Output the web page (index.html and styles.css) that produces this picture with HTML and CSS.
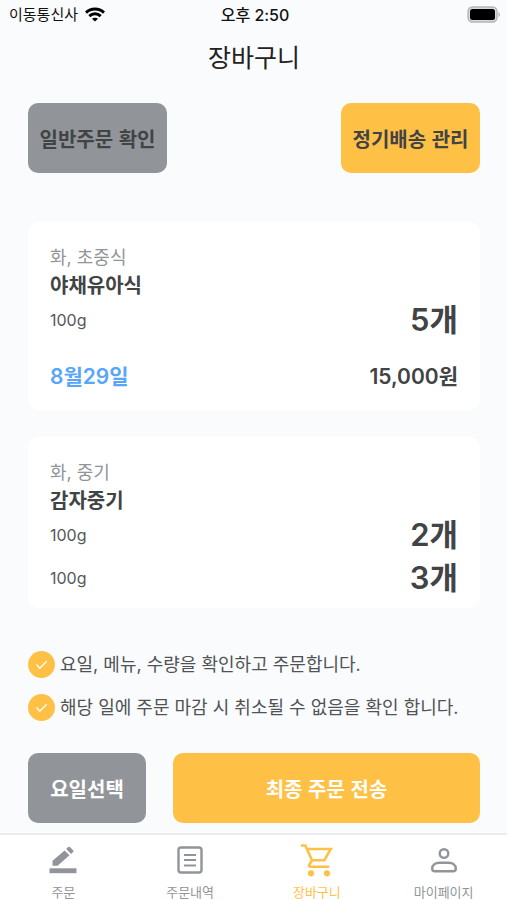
FILE: index.html
```html
<!DOCTYPE html>
<html lang="ko">
<head>
<meta charset="utf-8">
<meta name="viewport" content="width=device-width, initial-scale=1">
<title>장바구니</title>
<link rel="stylesheet" href="styles.css">
</head>
<body>
<div class="status">
  <div class="carrier">
    <span>이동통신사</span>
    <svg width="20" height="15" viewBox="0 0 20 15" fill="none" stroke="#000" stroke-width="3" aria-hidden="true">
      <path d="M1 5.6C6 .8 14 .8 19 5.6"/>
      <path d="M4.3 9.1c3.3-3 8.1-3 11.4 0"/>
      <path d="M10 14.6 7 11.8c1.7-1.5 4.3-1.5 6 0z" fill="#000" stroke="none"/>
    </svg>
  </div>
  <time class="clock">오후 2:50</time>
  <svg class="battery" width="34" height="17" viewBox="0 0 34 17" aria-hidden="true">
    <rect x="1" y="1" width="29" height="15" rx="4.5" fill="#d8d9db" stroke="#b4b5b7" stroke-width="1.4"/>
    <rect x="3" y="3" width="25" height="11" rx="2.5" fill="#000"/>
    <path d="M31.5 6c2 .8 2 4.2 0 5z" fill="#b4b5b7"/>
  </svg>
</div>

<main class="page">
  <h1 class="title">장바구니</h1>

  <div class="modes">
    <button class="btn btn-gray btn-dark" type="button">일반주문 확인</button>
    <button class="btn btn-yellow btn-dark" type="button">정기배송 관리</button>
  </div>

  <section class="card">
    <p class="meta">화, 초중식</p>
    <h2 class="name">야채유아식</h2>
    <div class="items">
      <div class="item"><span class="weight">100g</span><strong class="count">5개</strong></div>
    </div>
    <div class="total"><span class="date">8월29일</span><span>15,000원</span></div>
  </section>

  <section class="card card-short">
    <p class="meta">화, 중기</p>
    <h2 class="name">감자중기</h2>
    <div class="items">
      <div class="item"><span class="weight">100g</span><strong class="count">2개</strong></div>
      <div class="item"><span class="weight">100g</span><strong class="count">3개</strong></div>
    </div>
  </section>

  <div class="checks">
    <label class="check">
      <input type="checkbox" checked>
      <svg class="tick" width="27" height="27" viewBox="0 0 27 27" aria-hidden="true"><path d="m8.5 13.5 3.2 3.7 7-7"/></svg>
      <span>요일, 메뉴, 수량을 확인하고 주문합니다.</span>
    </label>
    <label class="check">
      <input type="checkbox" checked>
      <svg class="tick" width="27" height="27" viewBox="0 0 27 27" aria-hidden="true"><path d="m8.5 13.5 3.2 3.7 7-7"/></svg>
      <span>해당 일에 주문 마감 시 취소될 수 없음을 확인 합니다.</span>
    </label>
  </div>

  <div class="actions">
    <button class="btn btn-gray" type="button">요일선택</button>
    <button class="btn btn-yellow btn-wide" type="button">최종 주문 전송</button>
  </div>
</main>

<nav class="tabs">
  <a class="tab" href="#order">
    <svg width="36" height="36" viewBox="0 0 36 36" fill="currentColor" aria-hidden="true">
      <path d="M7.5 23.7v-5L19.6 8.4l4.9 4.9-11.9 10.4z"/>
      <path d="m21.2 7 1.9-1.9q.9-.8 1.8 0l3.2 3.2q.8.9 0 1.7l-2 1.9z"/>
      <path d="M4.5 26.3h27v4.9h-27z"/>
    </svg>
    <span>주문</span>
  </a>
  <a class="tab" href="#history">
    <svg width="36" height="36" viewBox="0 0 36 36" fill="none" stroke="currentColor" stroke-width="2" aria-hidden="true">
      <rect x="6.5" y="5.5" width="23" height="25" rx="2.5" stroke-width="2.4"/>
      <path d="M12 13h12M12 18h12M12 23.5h12"/>
    </svg>
    <span>주문내역</span>
  </a>
  <a class="tab tab-active" href="#cart" aria-current="page">
    <svg width="36" height="36" viewBox="0 0 36 36" fill="none" stroke="currentColor" stroke-width="2.6" aria-hidden="true">
      <path d="M2 3.5h4.3L13 18.3h12.3L31.8 7H8.2M13 18.3l-2.7 4.4q-.7 2.1 1.3 2.1h18.7"/>
      <circle cx="12" cy="31.3" r="3.1" fill="currentColor" stroke="none"/>
      <circle cx="28" cy="31.3" r="3.1" fill="currentColor" stroke="none"/>
    </svg>
    <span>장바구니</span>
  </a>
  <a class="tab" href="#mypage">
    <svg width="36" height="36" viewBox="0 0 36 36" fill="none" stroke="currentColor" stroke-width="2.4" aria-hidden="true">
      <circle cx="18" cy="11.5" r="4.3"/>
      <path d="M9 29.3c-2 0-2.8-.9-2.8-2.6 0-4 3.3-5.9 7.3-5.9h9c4 0 7.3 1.9 7.3 5.9 0 1.7-.8 2.6-2.8 2.6z"/>
    </svg>
    <span>마이페이지</span>
  </a>
</nav>
</body>
</html>
```
FILE: styles.css
```css
* {
  box-sizing: border-box;
}

body {
  margin: 0;
  min-height: 100vh;
  display: flex;
  flex-direction: column;
  background: #fafbfd;
  color: #414345;
  font-family: Inter, "Noto Sans CJK KR", sans-serif;
}

h1,
h2,
p {
  margin: 0;
}

.status {
  display: grid;
  grid-template-columns: 1fr auto 1fr;
  align-items: center;
  height: 29px;
  padding: 0 6px 0 9px;
  color: #111;
  font-size: 15px;
  line-height: 28px;
}

.carrier {
  display: flex;
  align-items: center;
  gap: 7px;
}

.clock {
  font-size: 16px;
  font-weight: 500;
}

.battery {
  justify-self: end;
}

.page {
  flex: 1;
  display: flex;
  flex-direction: column;
  padding: 0 27px 10px 28px;
}

.title {
  margin-bottom: 16px;
  color: #222;
  font-size: 25px;
  font-weight: 400;
  line-height: 58px;
  text-align: center;
}

.modes {
  display: flex;
  justify-content: space-between;
  margin-bottom: 49px;
}

.btn {
  height: 70px;
  padding: 2px 11px 0;
  border: 0;
  border-radius: 10px;
  color: #fff;
  font-family: "Noto Sans CJK KR", sans-serif;
  font-size: 20px;
  font-weight: 600;
  line-height: 28px;
}

.modes .btn {
  min-width: 139px;
}

.btn-gray {
  background: #919599;
}

.btn-yellow {
  background: #ffc145;
}

.btn-dark {
  color: #414345;
}

.card {
  margin-bottom: 27px;
  padding: 22px 22px 19px;
  border-radius: 10px;
  background: #fff;
}

.card-short {
  padding-bottom: 10px;
}

.meta {
  color: #919599;
  font-size: 18px;
  line-height: 28px;
}

.name {
  font-size: 20px;
  font-weight: 600;
  line-height: 28px;
}

.items {
  display: grid;
  gap: 3px;
}

.item,
.total {
  display: flex;
  align-items: center;
  justify-content: space-between;
}

.item {
  height: 40px;
}

.weight {
  color: #55585a;
  font-size: 16px;
}

.count {
  font-size: 31px;
  font-weight: 600;
  line-height: 40px;
}

.total {
  margin-top: 23px;
  font-size: 21px;
  font-weight: 600;
  line-height: 28px;
}

.date {
  color: #58a6f8;
}

.checks {
  display: grid;
  gap: 16px;
  margin: 16px 0 32px;
}

.check {
  display: flex;
  align-items: center;
  gap: 5px;
  color: #505355;
  font-size: 18px;
  line-height: 27px;
}

.check input {
  position: absolute;
  opacity: 0;
}

.tick {
  flex: none;
  border-radius: 50%;
  background: #ffc145;
  fill: none;
  stroke: #fff;
  stroke-width: 1.3;
}

.actions {
  display: flex;
  gap: 27px;
}

.actions .btn {
  min-width: 118px;
}

.btn-wide {
  flex: 1;
}

.tabs {
  display: grid;
  grid-template-columns: repeat(4, 1fr);
  height: 67px;
  padding-top: 7px;
  border-top: 2px solid #ebecee;
  background: #fff;
}

.tab {
  display: flex;
  flex-direction: column;
  align-items: center;
  color: #919599;
  font-size: 13px;
  line-height: 28px;
  text-decoration: none;
}

.tab svg {
  flex: none;
}

.tab-active {
  color: #ffc145;
}
```
